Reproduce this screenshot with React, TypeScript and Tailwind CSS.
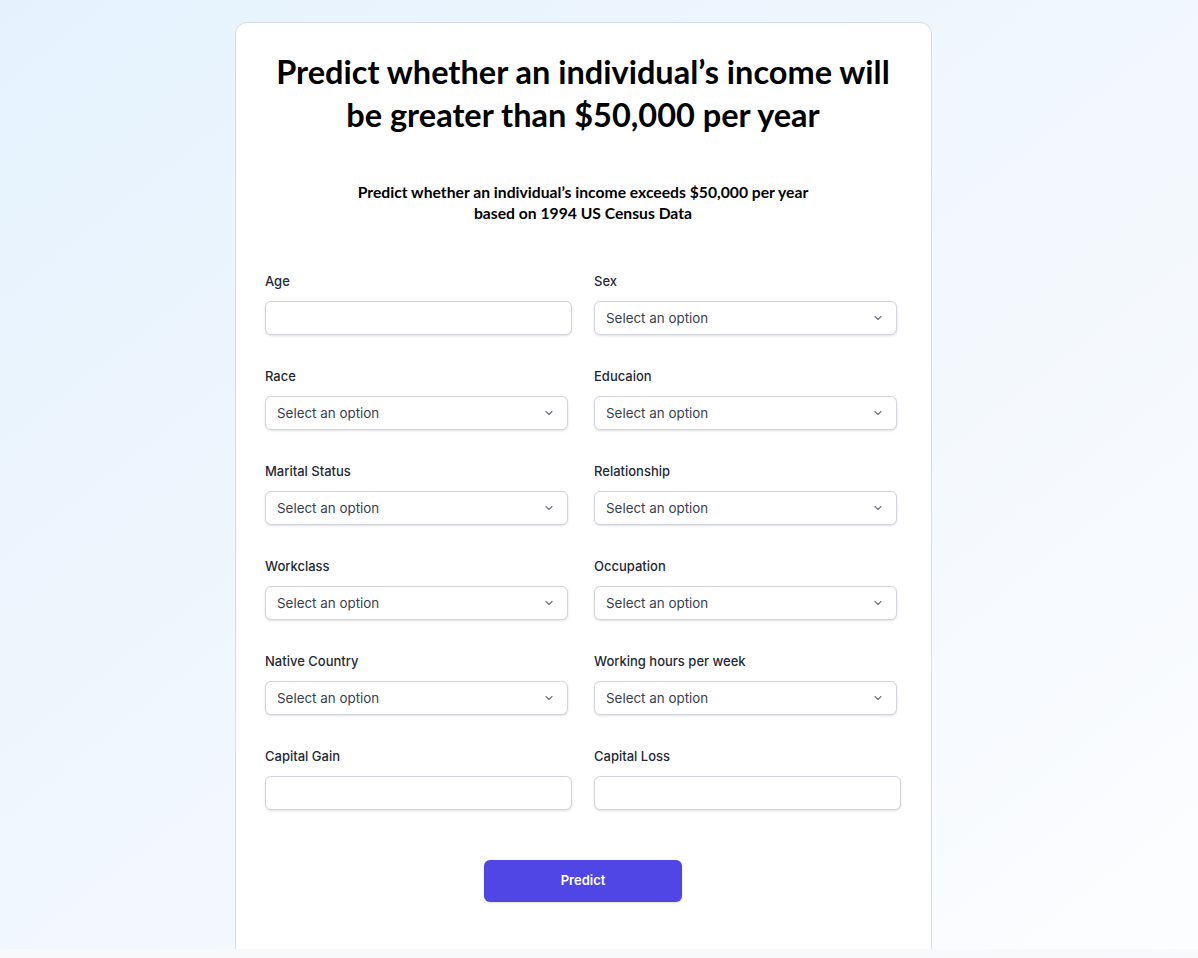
import React from "react";

const fields: { label: string; kind: "input" | "select" }[] = [
  { label: "Age", kind: "input" },
  { label: "Sex", kind: "select" },
  { label: "Race", kind: "select" },
  { label: "Educaion", kind: "select" },
  { label: "Marital Status", kind: "select" },
  { label: "Relationship", kind: "select" },
  { label: "Workclass", kind: "select" },
  { label: "Occupation", kind: "select" },
  { label: "Native Country", kind: "select" },
  { label: "Working hours per week", kind: "select" },
  { label: "Capital Gain", kind: "input" },
  { label: "Capital Loss", kind: "input" },
];

function Chevron() {
  return (
    <svg width="12" height="12" viewBox="0 0 20 20" fill="none" stroke="#6b7280" strokeWidth="1.8" strokeLinecap="round" strokeLinejoin="round">
      <path d="M5 7.5l5 5 5-5" />
    </svg>
  );
}

function Field({ label, kind }: { label: string; kind: "input" | "select" }) {
  return (
    <div className="flex flex-col">
      <label className="text-[13px] leading-5 text-[#1f2937] font-medium">{label}</label>
      {kind === "input" ? (
        <div className="mt-[10px] h-[34px] w-full rounded-md border border-[#d1d5db] bg-white shadow-sm"></div>
      ) : (
        <div className="mt-[10px] h-[34px] w-[303px] rounded-md border border-[#d1d5db] bg-white shadow-sm flex items-center justify-between pl-[11px] pr-[12px]">
          <span className="text-[13.4px] text-[#374151]">Select an option</span>
          <Chevron />
        </div>
      )}
    </div>
  );
}

export default function App() {
  return (
    <div className="w-full h-[958px] overflow-hidden flex flex-col" style={{ fontFamily: "Inter, 'Noto Sans', sans-serif" }}>
      <div className="h-[949px] overflow-hidden bg-gradient-to-br from-[#e5f2fd] via-[#f1f7fd] to-[#fcfdff] flex justify-center pt-[22px] pr-[31px]">
        <div className="w-[697px] h-[960px] bg-white rounded-xl border border-[#d3dde8] pl-[29px] pr-[30px] pt-[27px]">
          <h1
            className="text-center text-[32.5px] leading-[43px] font-bold text-black"
            style={{ fontFamily: "Lato, 'Noto Sans', sans-serif" }}
          >
            Predict whether an individual’s income will
            <br />
            be greater than $50,000 per year
          </h1>
          <p
            className="mt-[46px] text-center text-[15.7px] leading-[21px] font-bold text-black"
            style={{ fontFamily: "Lato, 'Noto Sans', sans-serif" }}
          >
            Predict whether an individual’s income exceeds $50,000 per year
            <br />
            based on 1994 US Census Data
          </p>
          <div className="mt-[47px] grid grid-cols-2 gap-x-[22px] gap-y-[31px]">
            {fields.map((f) => (
              <Field key={f.label} label={f.label} kind={f.kind} />
            ))}
          </div>
          <div className="mt-[50px] flex justify-center">
            <button className="w-[198px] h-[42px] rounded-md bg-[#4f46e5] text-white text-[13px] font-semibold shadow-sm">
              Predict
            </button>
          </div>
        </div>
      </div>
      <div className="h-[9px] bg-[#f8f9fb]"></div>
    </div>
  );
}
